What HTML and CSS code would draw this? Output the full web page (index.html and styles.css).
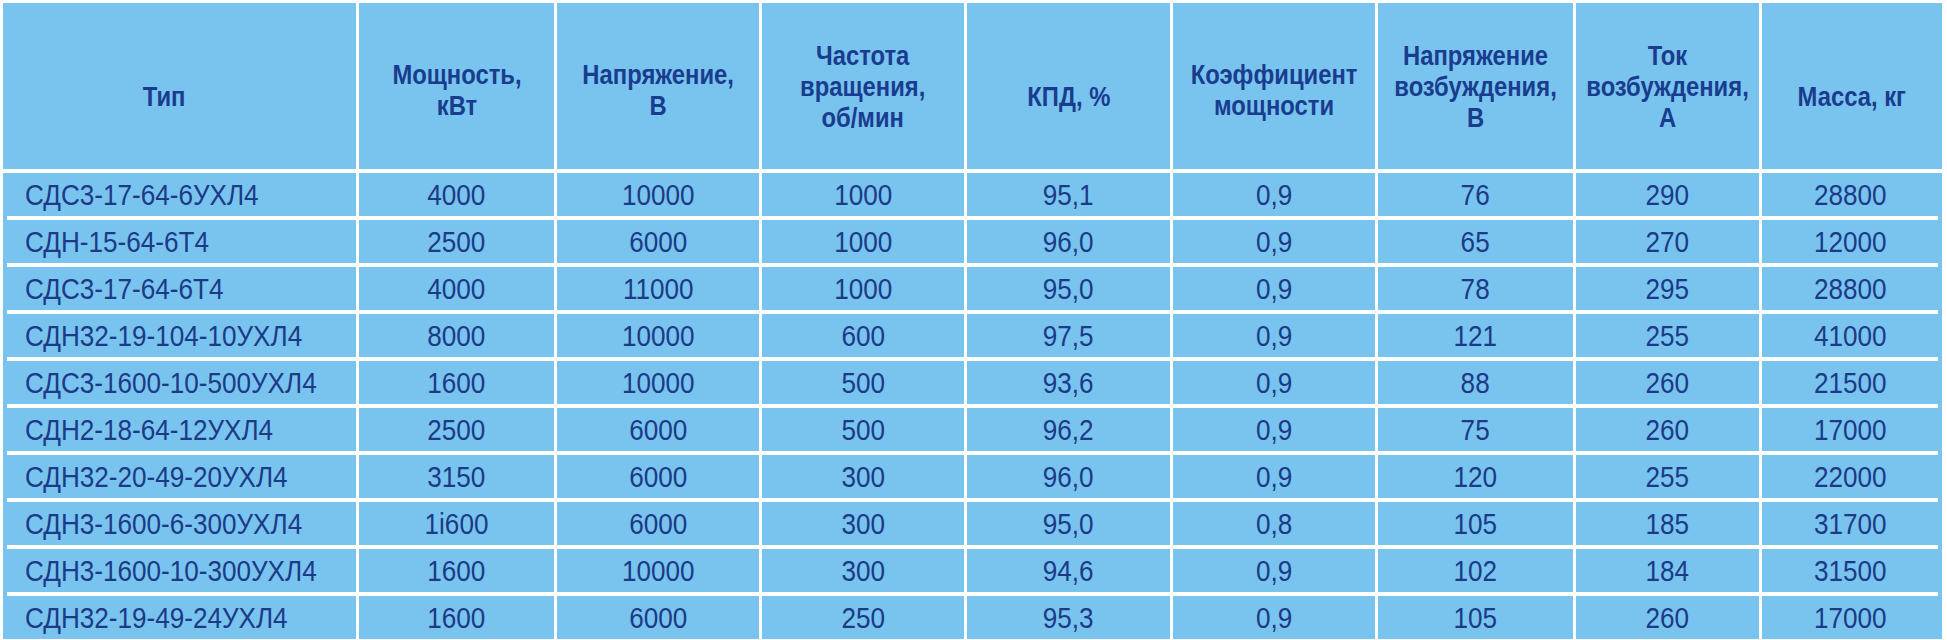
FILE: index.html
```html
<!DOCTYPE html>
<html lang="ru">
<head>
<meta charset="utf-8">
<title>Синхронные двигатели</title>
<link rel="stylesheet" href="styles.css">
</head>
<body>
<div class="tbl">
  <div class="head">
    <div class="hc single type"><span class="ht">Тип</span></div>
    <div class="hc"><span class="ht">Мощность,<br>кВт</span></div>
    <div class="hc"><span class="ht">Напряжение,<br>В</span></div>
    <div class="hc triple"><span class="ht">Частота<br>вращения,<br>об/мин</span></div>
    <div class="hc single"><span class="ht">КПД, %</span></div>
    <div class="hc"><span class="ht">Коэффициент<br>мощности</span></div>
    <div class="hc triple"><span class="ht">Напряжение<br>возбуждения,<br>В</span></div>
    <div class="hc triple"><span class="ht">Ток<br>возбуждения,<br>А</span></div>
    <div class="hc single"><span class="ht">Масса, кг</span></div>
  </div>
  <div class="body">
    <div class="row"><div class="c first"><span class="t">СДС3-17-64-6УХЛ4</span></div><div class="c"><span class="t">4000</span></div><div class="c"><span class="t">10000</span></div><div class="c"><span class="t">1000</span></div><div class="c"><span class="t">95,1</span></div><div class="c"><span class="t">0,9</span></div><div class="c"><span class="t">76</span></div><div class="c"><span class="t">290</span></div><div class="c"><span class="t">28800</span></div></div>
    <div class="row"><div class="c first"><span class="t">СДН-15-64-6Т4</span></div><div class="c"><span class="t">2500</span></div><div class="c"><span class="t">6000</span></div><div class="c"><span class="t">1000</span></div><div class="c"><span class="t">96,0</span></div><div class="c"><span class="t">0,9</span></div><div class="c"><span class="t">65</span></div><div class="c"><span class="t">270</span></div><div class="c"><span class="t">12000</span></div></div>
    <div class="row"><div class="c first"><span class="t">СДС3-17-64-6Т4</span></div><div class="c"><span class="t">4000</span></div><div class="c"><span class="t">11000</span></div><div class="c"><span class="t">1000</span></div><div class="c"><span class="t">95,0</span></div><div class="c"><span class="t">0,9</span></div><div class="c"><span class="t">78</span></div><div class="c"><span class="t">295</span></div><div class="c"><span class="t">28800</span></div></div>
    <div class="row"><div class="c first"><span class="t">СДН32-19-104-10УХЛ4</span></div><div class="c"><span class="t">8000</span></div><div class="c"><span class="t">10000</span></div><div class="c"><span class="t">600</span></div><div class="c"><span class="t">97,5</span></div><div class="c"><span class="t">0,9</span></div><div class="c"><span class="t">121</span></div><div class="c"><span class="t">255</span></div><div class="c"><span class="t">41000</span></div></div>
    <div class="row"><div class="c first"><span class="t">СДС3-1600-10-500УХЛ4</span></div><div class="c"><span class="t">1600</span></div><div class="c"><span class="t">10000</span></div><div class="c"><span class="t">500</span></div><div class="c"><span class="t">93,6</span></div><div class="c"><span class="t">0,9</span></div><div class="c"><span class="t">88</span></div><div class="c"><span class="t">260</span></div><div class="c"><span class="t">21500</span></div></div>
    <div class="row"><div class="c first"><span class="t">СДН2-18-64-12УХЛ4</span></div><div class="c"><span class="t">2500</span></div><div class="c"><span class="t">6000</span></div><div class="c"><span class="t">500</span></div><div class="c"><span class="t">96,2</span></div><div class="c"><span class="t">0,9</span></div><div class="c"><span class="t">75</span></div><div class="c"><span class="t">260</span></div><div class="c"><span class="t">17000</span></div></div>
    <div class="row"><div class="c first"><span class="t">СДН32-20-49-20УХЛ4</span></div><div class="c"><span class="t">3150</span></div><div class="c"><span class="t">6000</span></div><div class="c"><span class="t">300</span></div><div class="c"><span class="t">96,0</span></div><div class="c"><span class="t">0,9</span></div><div class="c"><span class="t">120</span></div><div class="c"><span class="t">255</span></div><div class="c"><span class="t">22000</span></div></div>
    <div class="row"><div class="c first"><span class="t">СДН3-1600-6-300УХЛ4</span></div><div class="c"><span class="t">1i600</span></div><div class="c"><span class="t">6000</span></div><div class="c"><span class="t">300</span></div><div class="c"><span class="t">95,0</span></div><div class="c"><span class="t">0,8</span></div><div class="c"><span class="t">105</span></div><div class="c"><span class="t">185</span></div><div class="c"><span class="t">31700</span></div></div>
    <div class="row"><div class="c first"><span class="t">СДН3-1600-10-300УХЛ4</span></div><div class="c"><span class="t">1600</span></div><div class="c"><span class="t">10000</span></div><div class="c"><span class="t">300</span></div><div class="c"><span class="t">94,6</span></div><div class="c"><span class="t">0,9</span></div><div class="c"><span class="t">102</span></div><div class="c"><span class="t">184</span></div><div class="c"><span class="t">31500</span></div></div>
    <div class="row"><div class="c first"><span class="t">СДН32-19-49-24УХЛ4</span></div><div class="c"><span class="t">1600</span></div><div class="c"><span class="t">6000</span></div><div class="c"><span class="t">250</span></div><div class="c"><span class="t">95,3</span></div><div class="c"><span class="t">0,9</span></div><div class="c"><span class="t">105</span></div><div class="c"><span class="t">260</span></div><div class="c"><span class="t">17000</span></div></div>
  </div>
</div>
</body>
</html>
```

FILE: styles.css
```css
html, body {
  margin: 0;
  padding: 0;
  background: #ffffff;
}

body {
  font-family: "Liberation Sans", Arial, sans-serif;
  color: #1c3a86;
}

.tbl {
  margin: 3px 0 0 3px;
  width: 1939px;
  display: flex;
  flex-direction: column;
  gap: 4px;
}

.head {
  display: grid;
  grid-template-columns: 353px 195px 202px 202px 203px 202px 195px 183px 180px;
  column-gap: 3px;
  height: 166px;
}

.hc {
  background: #78c4ef;
  display: flex;
  align-items: center;
  justify-content: center;
  text-align: center;
  padding-top: 8px;
  color: #1a3c8e;
}

.hc.single {
  padding-top: 20px;
}

.hc.triple {
  padding-top: 0;
}

.hc.type {
  padding-right: 30px;
}

.ht {
  display: inline-block;
  font-weight: bold;
  font-size: 28px;
  line-height: 31px;
  white-space: nowrap;
  transform: scaleX(0.85);
  transform-origin: center;
}

.body {
  display: flex;
  flex-direction: column;
  gap: 4px;
  border-left: 4px solid #78c4ef;
  border-right: 4px solid #78c4ef;
}

.row {
  display: grid;
  grid-template-columns: 349px 195px 202px 202px 203px 202px 195px 183px 176px;
  column-gap: 3px;
  height: 43px;
}

.c {
  background: #78c4ef;
  display: flex;
  align-items: center;
  justify-content: center;
}

.t {
  display: inline-block;
  font-size: 29px;
  line-height: 32px;
  white-space: nowrap;
  transform: scaleX(0.9);
  transform-origin: center;
}

.c.first {
  justify-content: flex-start;
  padding-left: 18px;
}

.c.first .t {
  transform-origin: left center;
}
```
